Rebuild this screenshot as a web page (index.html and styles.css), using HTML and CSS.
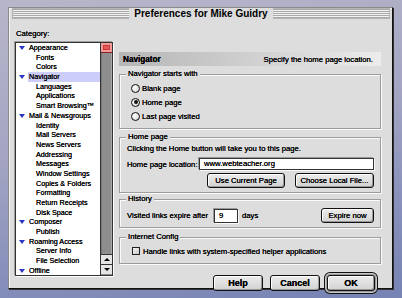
FILE: index.html
```html
<!DOCTYPE html>
<html lang="en-US">
<head>
	<meta charset="utf-8">
	<title>Preferences for Mike Guidry</title>
	<link rel="stylesheet" href="styles.css">
</head>
<body>
<div class="window">
	<div class="titlebar"><span class="title">Preferences for Mike Guidry</span></div>
	<div class="content">
		<!-- category tree on the left -->
		<div class="sidebar">
			<div class="cat-label">Category:</div>
			<div class="listbox">
				<ul class="tree">
					<li class="top"><span class="tri"></span><span class="name">Appearance</span></li>
					<li class="child">Fonts</li>
					<li class="child">Colors</li>
					<li class="top"><span class="tri"></span><span class="name sel">Navigator</span></li>
					<li class="child">Languages</li>
					<li class="child">Applications</li>
					<li class="child">Smart Browsing&trade;</li>
					<li class="top"><span class="tri"></span><span class="name">Mail &amp; Newsgroups</span></li>
					<li class="child">Identity</li>
					<li class="child">Mail Servers</li>
					<li class="child">News Servers</li>
					<li class="child">Addressing</li>
					<li class="child">Messages</li>
					<li class="child">Window Settings</li>
					<li class="child">Copies &amp; Folders</li>
					<li class="child">Formatting</li>
					<li class="child">Return Receipts</li>
					<li class="child">Disk Space</li>
					<li class="top"><span class="tri"></span><span class="name">Composer</span></li>
					<li class="child">Publish</li>
					<li class="top"><span class="tri"></span><span class="name">Roaming Access</span></li>
					<li class="child">Server Info</li>
					<li class="child">File Selection</li>
					<li class="top"><span class="tri"></span><span class="name">Offline</span></li>
				</ul>
				<div class="scrollbar">
					<div class="thumb"></div>
					<div class="track"></div>
					<div class="arrow up"></div>
					<div class="arrow down"></div>
				</div>
			</div>
		</div>

		<!-- settings panel -->
		<div class="panel">
			<div class="panel-head"><b>Navigator</b><span>Specify the home page location.</span></div>

			<div class="group g-start">
				<div class="legend">Navigator starts with</div>
				<div class="radio-row"><span class="radio"></span>Blank page</div>
				<div class="radio-row"><span class="radio on"></span>Home page</div>
				<div class="radio-row"><span class="radio"></span>Last page visited</div>
			</div>

			<div class="group g-home">
				<div class="legend">Home page</div>
				<div class="line">Clicking the Home button will take you to this page.</div>
				<div class="loc-row">Home page location:<span class="field loc">www.webteacher.org</span></div>
				<div class="btn-row">
					<span class="btn small use">Use Current Page</span>
					<span class="btn small choose">Choose Local File...</span>
				</div>
			</div>

			<div class="group g-history">
				<div class="legend">History</div>
				<div class="hist-row">Visited links expire after<span class="field days">9</span><span class="unit">days</span><span class="btn small expire">Expire now</span></div>
			</div>

			<div class="group g-ic">
				<div class="legend">Internet Config</div>
				<div class="check-row"><span class="check"></span>Handle links with system-specified helper applications</div>
			</div>

			<div class="actions">
				<span class="btn big">Help</span>
				<span class="btn big">Cancel</span>
				<span class="btn big default">OK</span>
			</div>
		</div>
	</div>
</div>
</body>
</html>
```

FILE: styles.css
```css
html, body {
	margin: 0;
	padding: 0;
}
body {
	width: 402px;
	height: 298px;
	overflow: hidden;
	background: linear-gradient(170deg, #b7b6ca 0%, #a2a4c2 45%, #8790bb 75%, #7683b3 100%);
	font-family: "Liberation Sans", Arial, sans-serif;
	color: #000;
}
.window {
	box-sizing: border-box;
	width: 385px;
	height: 282px;
	margin: 7px 0 0 8px;
	background: #dddddd;
	border: 1px solid #8a8a8a;
	border-right-color: #111;
	border-bottom-color: #111;
	box-shadow: 1px 1px 0 #333, inset 1px 1px 0 #f4f4f4;
}
.titlebar {
	height: 11px;
	margin: 0 2px 0 3px;
	display: flex;
	justify-content: center;
	background: repeating-linear-gradient(to bottom, #f2f2f2 0, #f2f2f2 1px, #a9a9a9 1px, #a9a9a9 2px);
	box-shadow: inset 0 0 0 1px #b4b4b4;
}
.title {
	background: #dddddd;
	padding: 0 5px;
	font-weight: bold;
	font-size: 10px;
	line-height: 11px;
}
.content {
	display: flex;
	align-items: flex-start;
	padding: 10px 0 0 6px;
	text-shadow: 0 0 0.3px #000;
}

/* sidebar */
.sidebar {
	width: 98px;
}
.cat-label {
	font-size: 7.7px;
	line-height: 10px;
	padding-left: 1px;
	margin-bottom: 3px;
}
.listbox {
	box-sizing: border-box;
	width: 98px;
	height: 234px;
	display: flex;
	background: #fff;
	border: 1px solid #333;
	box-shadow: 1px 1px 0 #fff, -1px -1px 0 #a0a0a0;
}
.tree {
	list-style: none;
	margin: 0;
	padding: 0;
	width: 85px;
	overflow: hidden;
	font-size: 7.2px;
	line-height: 9.7px;
	white-space: nowrap;
}
.tree li {
	height: 9.7px;
}
.tree .top {
	display: flex;
	align-items: center;
	padding-left: 3px;
}
.tree .child {
	padding-left: 20px;
}
.tri {
	width: 0;
	height: 0;
	border-left: 3.5px solid transparent;
	border-right: 3.5px solid transparent;
	border-top: 4px solid #2a36c4;
	margin-right: 3px;
}
.name {
	flex: 1;
	padding-left: 1px;
	line-height: 9.7px;
}
.name.sel {
	background: #cccdf8;
}
.scrollbar {
	width: 11px;
	display: flex;
	flex-direction: column;
	border-left: 1px solid #333;
	background: #8e8e8e;
}
.thumb {
	height: 9px;
	background: #e45858;
	border-bottom: 1px solid #8a2020;
	box-shadow: inset 0 0 0 2px #f29a9a, inset 0 0 0 3px #c83a3a;
}
.track {
	flex: 1;
	box-shadow: inset 1px 0 0 #777, inset -1px 0 0 #a8a8a8;
}
.arrow {
	height: 9px;
	border-top: 1px solid #333;
	background: #e4e4e4;
	display: flex;
	justify-content: center;
	align-items: center;
}
.arrow.down {
	margin-bottom: 1px;
}
.arrow::after {
	content: "";
	border-left: 3px solid transparent;
	border-right: 3px solid transparent;
}
.arrow.up::after {
	border-bottom: 3px solid #000;
}
.arrow.down::after {
	border-top: 3px solid #000;
}

/* panel */
.panel {
	width: 262px;
	margin: 23px 0 0 6px;
	font-size: 7.7px;
}
.panel-head {
	height: 14px;
	display: flex;
	justify-content: space-between;
	align-items: center;
	padding: 0 8px 0 4px;
	background: linear-gradient(to right, #b6b6b6, #d2d2d2 55%, #ececec);
}
.panel-head b {
	font-size: 8.2px;
}
.group {
	box-sizing: border-box;
	border: 1px solid #9c9c9c;
	box-shadow: 1px 1px 0 #fafafa, inset 1px 1px 0 #fafafa;
	padding: 0 6px 0 7px;
}
.legend {
	display: table;
	margin: -6px 0 0 -1px;
	padding: 0 2px;
	background: #dddddd;
	line-height: 10px;
}
.g-start {
	height: 55px;
	margin-top: 8px;
	padding-left: 11px;
}
.g-start .legend {
	margin-left: -5px;
}
.radio-row {
	display: flex;
	align-items: center;
	height: 14px;
}
.g-start .legend + .radio-row {
	margin-top: 2px;
}
.radio {
	box-sizing: border-box;
	width: 9px;
	height: 9px;
	border-radius: 50%;
	border: 1px solid #111;
	background: radial-gradient(circle at 35% 35%, #fff, #ddd 70%, #aaa);
	margin-right: 2px;
	display: flex;
	justify-content: center;
	align-items: center;
}
.radio.on::after {
	content: "";
	width: 4px;
	height: 4px;
	border-radius: 50%;
	background: #111;
}
.g-home {
	height: 56px;
	margin-top: 8px;
}
.line {
	line-height: 10px;
	margin-top: 2px;
}
.loc-row {
	display: flex;
	justify-content: space-between;
	align-items: center;
	margin-top: 4px;
}
.field {
	box-sizing: border-box;
	height: 12px;
	background: #fff;
	border: 1px solid #333;
	box-shadow: 1px 1px 0 #fafafa, -1px -1px 0 #999;
	padding-left: 4px;
	line-height: 10px;
}
.loc {
	width: 175px;
}
.btn-row {
	display: flex;
	justify-content: flex-end;
	gap: 10px;
	margin-top: 3px;
}
.btn {
	box-sizing: border-box;
	display: flex;
	justify-content: center;
	align-items: center;
	border: 1px solid #111;
	border-radius: 3px;
	background: linear-gradient(#ececec, #d2d2d2);
	box-shadow: inset 1px 1px 0 #fff, inset -1px -1px 0 #999;
}
.btn.small {
	height: 15px;
}
.use {
	width: 78px;
}
.choose {
	width: 79px;
}
.g-history {
	height: 29px;
	margin-top: 6px;
}
.hist-row {
	display: flex;
	align-items: center;
	margin-top: 4px;
	height: 15px;
}
.days {
	width: 24px;
	height: 14px;
	margin-left: 6px;
	line-height: 12px;
}
.unit {
	margin-left: 4px;
}
.expire {
	width: 53px;
	margin-left: auto;
}
.g-ic {
	height: 27px;
	margin-top: 9px;
	padding-left: 12px;
}
.g-ic .legend {
	margin-left: -6px;
}
.check-row {
	display: flex;
	align-items: center;
	height: 10px;
	margin-top: 4px;
}
.check {
	box-sizing: border-box;
	width: 8px;
	height: 8px;
	border: 1px solid #222;
	background: linear-gradient(135deg, #f4f4f4, #c8c8c8);
	margin-right: 3px;
}
.actions {
	display: flex;
	justify-content: flex-end;
	align-items: center;
	gap: 7px;
	height: 19px;
	margin-top: 9px;
	padding-right: 4px;
}
.btn.big {
	width: 50px;
	height: 16px;
	font-weight: bold;
	font-size: 9px;
}
.btn.default {
	width: 48px;
	box-shadow: inset 1px 1px 0 #fff, inset -1px -1px 0 #999, 0 0 0 1px #9a9a9a, 0 0 0 2px #c8c8c8, 0 0 0 3px #111;
	margin-right: 2px;
}
```
